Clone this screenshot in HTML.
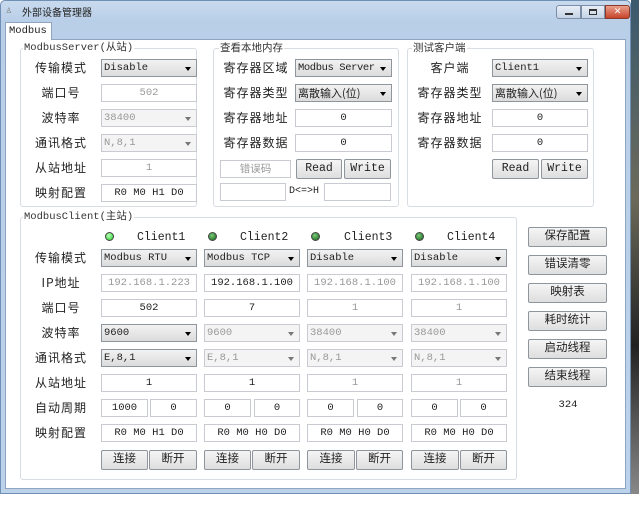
<!DOCTYPE html><html><head><meta charset="utf-8"><style>
*{box-sizing:border-box;margin:0;padding:0}
body{width:639px;height:528px;background:#fff;position:relative;overflow:hidden;font-family:"Liberation Mono","Noto Sans CJK SC",monospace;font-size:11px;color:#222}
.a{position:absolute}
.win{left:0;top:0;width:631px;height:494px;background:linear-gradient(#c9daee,#b9cfe8 20px,#bcd2ea);border:1px solid #6f8fb5;border-radius:5px 5px 0 0}
.desk{left:631px;top:0;width:8px;height:494px;background:linear-gradient(#3b5a6e,#6b6a5a 40%,#222 70%,#888)}
.pane{left:5px;top:39px;width:621px;height:450px;background:#fff;border:1px solid #8ea4bf}
.tab{left:5px;top:22px;width:47px;height:18px;background:#fff;border:1px solid #8ea4bf;border-bottom:none;padding:2px 0 0 3px;font-size:10.5px}
.grp{border:1px solid #d8dde3;border-radius:3px}
.gt{background:#fff;padding:0 1px;font-family:"Liberation Mono","Noto Sans CJK SC",monospace;font-size:10.5px;line-height:12px;color:#333}
.lb{font-family:"Noto Sans CJK SC",sans-serif;font-size:12px;line-height:18px;text-align:center;letter-spacing:1px;color:#222}
.ed{height:18px;border:1px solid #c8ccd2;background:#fff;text-align:center;line-height:16px;font-size:10.5px}
.gr{color:#999}
.cb{height:18px;border:1px solid #8e959d;background:linear-gradient(#f2f2f2,#dcdcdc);padding-left:2px;font-size:10.5px;overflow:hidden;white-space:nowrap;display:flex;align-items:center}
.cb:after{content:"";position:absolute;right:5px;top:7px;border:3px solid transparent;border-top:4px solid #000}
.cd{border-color:#c8ccd2;background:#f4f4f4;color:#999}
.cd:after{border-top-color:#777}
.bt{height:20px;border:1px solid #8e959d;border-radius:2px;background:linear-gradient(#f5f5f5,#dedede);text-align:center;line-height:18px;font-family:"Liberation Mono","Noto Sans CJK SC",monospace;font-size:11.5px;color:#222}
.led{width:9px;height:9px;border-radius:50%;background:radial-gradient(circle at 40% 35%,#7c7,#186018);border:1px solid #444}
.led1{background:radial-gradient(circle at 40% 35%,#bfb,#2c2)}
.ct{font-size:11.5px}
</style></head><body>
<div class="a desk"></div>
<div class="a win"></div>
<div class="a" style="left:6px;top:5px;width:12px;height:12px;font-size:10px;color:#777">♙</div>
<div class="a" style="left:22px;top:4px;font-family:'Noto Sans CJK SC',sans-serif;font-size:10px">外部设备管理器</div>
<div class="a" style="left:556px;top:5px;width:25px;height:14px;border:1px solid #7b8ea8;border-radius:3px 0 0 3px;background:linear-gradient(#e8eef7,#c5d3e6)"><div class="a" style="left:8px;top:7px;width:8px;height:2px;background:#333"></div></div>
<div class="a" style="left:581px;top:5px;width:24px;height:14px;border:1px solid #7b8ea8;background:linear-gradient(#e8eef7,#c5d3e6)"><div class="a" style="left:7px;top:3px;width:8px;height:6px;border:1px solid #333;border-top-width:2px"></div></div>
<div class="a" style="left:605px;top:5px;width:25px;height:14px;border:1px solid #8a3a2a;border-radius:0 3px 3px 0;background:linear-gradient(#e9a08c,#c7442a);color:#fff;text-align:center;font-size:11px;line-height:12px;font-weight:bold">✕</div>
<div class="a pane"></div>
<div class="a tab">Modbus</div>

<div class="a grp" style="left:20px;top:48px;width:177px;height:159px"></div>
<div class="a gt" style="left:23px;top:42px">ModbusServer(从站)</div>
<div class="a lb" style="left:28px;top:59px;width:66px">传输模式</div>
<div class="a lb" style="left:28px;top:84px;width:66px">端口号</div>
<div class="a lb" style="left:28px;top:109px;width:66px">波特率</div>
<div class="a lb" style="left:28px;top:134px;width:66px">通讯格式</div>
<div class="a lb" style="left:28px;top:159px;width:66px">从站地址</div>
<div class="a lb" style="left:28px;top:184px;width:66px">映射配置</div>
<div class="a cb" style="left:101px;top:59px;width:96px">Disable</div>
<div class="a ed gr" style="left:101px;top:84px;width:96px">502</div>
<div class="a cb cd" style="left:101px;top:109px;width:96px">38400</div>
<div class="a cb cd" style="left:101px;top:134px;width:96px">N,8,1</div>
<div class="a ed gr" style="left:101px;top:159px;width:96px">1</div>
<div class="a ed" style="left:101px;top:184px;width:96px">R0 M0 H1 D0</div>

<div class="a grp" style="left:213px;top:48px;width:186px;height:159px"></div>
<div class="a gt" style="left:219px;top:42px;font-family:'Noto Sans CJK SC',sans-serif">查看本地内存</div>
<div class="a lb" style="left:222px;top:59px;width:68px">寄存器区域</div>
<div class="a lb" style="left:222px;top:84px;width:68px">寄存器类型</div>
<div class="a lb" style="left:222px;top:109px;width:68px">寄存器地址</div>
<div class="a lb" style="left:222px;top:134px;width:68px">寄存器数据</div>
<div class="a cb" style="left:295px;top:59px;width:97px;letter-spacing:-0.4px">Modbus Server</div>
<div class="a cb" style="left:295px;top:84px;width:97px;font-family:'Noto Sans CJK SC',sans-serif;font-size:11px">离散输入(位)</div>
<div class="a ed" style="left:295px;top:109px;width:97px">0</div>
<div class="a ed" style="left:295px;top:134px;width:97px">0</div>
<div class="a ed gr" style="left:220px;top:160px;width:71px;font-family:'Noto Sans CJK SC',sans-serif">错误码</div>
<div class="a bt" style="left:296px;top:159px;width:46px">Read</div>
<div class="a bt" style="left:344px;top:159px;width:47px">Write</div>
<div class="a ed" style="left:220px;top:183px;width:66px"></div>
<div class="a" style="left:289px;top:186px;font-size:10px">D&lt;=&gt;H</div>
<div class="a ed" style="left:324px;top:183px;width:67px"></div>

<div class="a grp" style="left:407px;top:48px;width:187px;height:159px"></div>
<div class="a gt" style="left:412px;top:42px;font-family:'Noto Sans CJK SC',sans-serif">测试客户端</div>
<div class="a lb" style="left:414px;top:59px;width:72px">客户端</div>
<div class="a lb" style="left:414px;top:84px;width:72px">寄存器类型</div>
<div class="a lb" style="left:414px;top:109px;width:72px">寄存器地址</div>
<div class="a lb" style="left:414px;top:134px;width:72px">寄存器数据</div>
<div class="a cb" style="left:492px;top:59px;width:96px">Client1</div>
<div class="a cb" style="left:492px;top:84px;width:96px;font-family:'Noto Sans CJK SC',sans-serif;font-size:11px">离散输入(位)</div>
<div class="a ed" style="left:492px;top:109px;width:96px">0</div>
<div class="a ed" style="left:492px;top:134px;width:96px">0</div>
<div class="a bt" style="left:492px;top:159px;width:47px">Read</div>
<div class="a bt" style="left:541px;top:159px;width:47px">Write</div>

<div class="a grp" style="left:20px;top:217px;width:497px;height:263px"></div>
<div class="a gt" style="left:23px;top:211px">ModbusClient(主站)</div>
<div class="a lb" style="left:28px;top:249px;width:66px">传输模式</div>
<div class="a lb" style="left:28px;top:274px;width:66px">IP地址</div>
<div class="a lb" style="left:28px;top:299px;width:66px">端口号</div>
<div class="a lb" style="left:28px;top:324px;width:66px">波特率</div>
<div class="a lb" style="left:28px;top:349px;width:66px">通讯格式</div>
<div class="a lb" style="left:28px;top:374px;width:66px">从站地址</div>
<div class="a lb" style="left:28px;top:399px;width:66px">自动周期</div>
<div class="a lb" style="left:28px;top:424px;width:66px">映射配置</div>

<div class="a led led1" style="left:105px;top:232px"></div><div class="a ct" style="left:137px;top:231px">Client1</div>
<div class="a led" style="left:208px;top:232px"></div><div class="a ct" style="left:240px;top:231px">Client2</div>
<div class="a led" style="left:311px;top:232px"></div><div class="a ct" style="left:344px;top:231px">Client3</div>
<div class="a led" style="left:415px;top:232px"></div><div class="a ct" style="left:447px;top:231px">Client4</div>

<div class="a cb" style="left:101px;top:249px;width:96px">Modbus RTU</div>
<div class="a cb" style="left:204px;top:249px;width:96px">Modbus TCP</div>
<div class="a cb" style="left:307px;top:249px;width:96px">Disable</div>
<div class="a cb" style="left:411px;top:249px;width:96px">Disable</div>

<div class="a ed gr" style="left:101px;top:274px;width:96px">192.168.1.223</div>
<div class="a ed" style="left:204px;top:274px;width:96px">192.168.1.100</div>
<div class="a ed gr" style="left:307px;top:274px;width:96px">192.168.1.100</div>
<div class="a ed gr" style="left:411px;top:274px;width:96px">192.168.1.100</div>

<div class="a ed" style="left:101px;top:299px;width:96px">502</div>
<div class="a ed" style="left:204px;top:299px;width:96px">7</div>
<div class="a ed gr" style="left:307px;top:299px;width:96px">1</div>
<div class="a ed gr" style="left:411px;top:299px;width:96px">1</div>

<div class="a cb" style="left:101px;top:324px;width:96px">9600</div>
<div class="a cb cd" style="left:204px;top:324px;width:96px">9600</div>
<div class="a cb cd" style="left:307px;top:324px;width:96px">38400</div>
<div class="a cb cd" style="left:411px;top:324px;width:96px">38400</div>

<div class="a cb" style="left:101px;top:349px;width:96px">E,8,1</div>
<div class="a cb cd" style="left:204px;top:349px;width:96px">E,8,1</div>
<div class="a cb cd" style="left:307px;top:349px;width:96px">N,8,1</div>
<div class="a cb cd" style="left:411px;top:349px;width:96px">N,8,1</div>

<div class="a ed" style="left:101px;top:374px;width:96px">1</div>
<div class="a ed" style="left:204px;top:374px;width:96px">1</div>
<div class="a ed gr" style="left:307px;top:374px;width:96px">1</div>
<div class="a ed gr" style="left:411px;top:374px;width:96px">1</div>

<div class="a ed" style="left:101px;top:399px;width:47px">1000</div><div class="a ed" style="left:150px;top:399px;width:47px">0</div>
<div class="a ed" style="left:204px;top:399px;width:47px">0</div><div class="a ed" style="left:254px;top:399px;width:46px">0</div>
<div class="a ed" style="left:307px;top:399px;width:47px">0</div><div class="a ed" style="left:357px;top:399px;width:46px">0</div>
<div class="a ed" style="left:411px;top:399px;width:47px">0</div><div class="a ed" style="left:460px;top:399px;width:47px">0</div>

<div class="a ed" style="left:101px;top:424px;width:96px">R0 M0 H1 D0</div>
<div class="a ed" style="left:204px;top:424px;width:96px">R0 M0 H0 D0</div>
<div class="a ed" style="left:307px;top:424px;width:96px">R0 M0 H0 D0</div>
<div class="a ed" style="left:411px;top:424px;width:96px">R0 M0 H0 D0</div>

<div class="a bt" style="left:101px;top:450px;width:47px">连接</div><div class="a bt" style="left:149px;top:450px;width:48px">断开</div>
<div class="a bt" style="left:204px;top:450px;width:47px">连接</div><div class="a bt" style="left:252px;top:450px;width:48px">断开</div>
<div class="a bt" style="left:307px;top:450px;width:48px">连接</div><div class="a bt" style="left:356px;top:450px;width:47px">断开</div>
<div class="a bt" style="left:411px;top:450px;width:48px">连接</div><div class="a bt" style="left:460px;top:450px;width:47px">断开</div>

<div class="a bt" style="left:528px;top:227px;width:79px">保存配置</div>
<div class="a bt" style="left:528px;top:255px;width:79px">错误清零</div>
<div class="a bt" style="left:528px;top:283px;width:79px">映射表</div>
<div class="a bt" style="left:528px;top:311px;width:79px">耗时统计</div>
<div class="a bt" style="left:528px;top:339px;width:79px">启动线程</div>
<div class="a bt" style="left:528px;top:367px;width:79px">结束线程</div>
<div class="a" style="left:557px;top:399px;width:22px;text-align:center;font-size:10.5px">324</div>
</body></html>
